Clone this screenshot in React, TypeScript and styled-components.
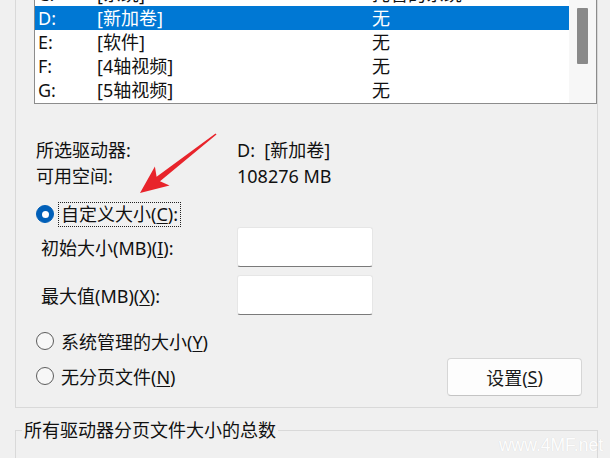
import React from "react";
import styled, { createGlobalStyle } from "styled-components";

const Global = createGlobalStyle`
  html, body { margin: 0; padding: 0; background: #f0f0f0; }
  body {
    font-family: "Noto Sans", "Noto Sans CJK SC", sans-serif;
    font-size: 18px;
    color: #111;
    overflow: hidden;
  }
`;

const Root = styled.div`
  position: relative;
  width: 610px;
  height: 458px;
  overflow: hidden;
  background: #f0f0f0;
`;

const Content = styled.div`
  margin-top: -50px;
  padding-left: 15px;
  display: flex;
  flex-direction: column;
`;

const GroupBox = styled.div`
  box-sizing: border-box;
  width: 583px;
  border: 1px solid #d9d9d9;
  padding: 30px 0 11px 18px;
  display: flex;
  flex-direction: column;
`;

const ListBox = styled.div`
  box-sizing: border-box;
  height: 123px;
  border: 1px solid #8c8c8c;
  background: #fff;
  display: flex;
  overflow: hidden;
`;

const Rows = styled.div`
  flex: 1;
  display: flex;
  flex-direction: column;
`;

const Row = styled.div<{ $selected?: boolean }>`
  height: 24px;
  flex: 0 0 24px;
  display: grid;
  grid-template-columns: 59px 275px 1fr;
  align-items: center;
  padding-left: 3px;
  line-height: 24px;
  background: ${(p) => (p.$selected ? "#0078d4" : "transparent")};
  color: ${(p) => (p.$selected ? "#fff" : "#111")};
  white-space: nowrap;
`;

const ScrollTrack = styled.div`
  width: 27px;
  flex: 0 0 27px;
  background: #f7f7f7;
  display: flex;
  justify-content: center;
  padding-top: 26px;
  box-sizing: border-box;
`;

const Thumb = styled.div`
  width: 11px;
  height: 56px;
  border-radius: 1px;
  background: #8a8a8a;
`;

const InfoGrid = styled.div`
  margin-top: 33px;
  margin-left: 2px;
  display: grid;
  grid-template-columns: 201px 1fr;
  grid-auto-rows: 26px;
  line-height: 26px;
`;

const RadioRow = styled.div<{ $mt: number }>`
  margin-top: ${(p) => p.$mt}px;
  margin-left: 2px;
  height: 26px;
  display: flex;
  align-items: center;
  gap: 7px;
  white-space: nowrap;
`;

const Radio = styled.span<{ $checked?: boolean }>`
  box-sizing: border-box;
  width: 18px;
  height: 18px;
  border-radius: 50%;
  flex: 0 0 18px;
  display: flex;
  align-items: center;
  justify-content: center;
  background: ${(p) => (p.$checked ? "#005fb8" : "#f7f7f7")};
  border: 1px solid ${(p) => (p.$checked ? "#005fb8" : "#5c5c5c")};
  &::after {
    content: "";
    width: 7px;
    height: 7px;
    border-radius: 50%;
    background: #fff;
    display: ${(p) => (p.$checked ? "block" : "none")};
  }
`;

const Focus = styled.span`
  border: 1px dotted #222;
  padding: 0 2px;
  margin-left: -3px;
  line-height: 23px;
`;

const U = styled.span`
  text-decoration: underline;
  text-underline-offset: 2px;
  text-decoration-thickness: 1px;
`;

const FieldRow = styled.div<{ $mt: number }>`
  margin-top: ${(p) => p.$mt}px;
  height: 40px;
  display: grid;
  grid-template-columns: 196px 136px;
  align-items: center;
  padding-left: 7px;
  white-space: nowrap;
`;

const Input = styled.div`
  box-sizing: border-box;
  height: 40px;
  background: #fff;
  border: 1px solid #e6e6e6;
  border-bottom: 1px solid #7a7a7a;
  border-radius: 3px;
`;

const ButtonRow = styled.div`
  margin-top: 4px;
  height: 38px;
  display: flex;
  align-items: center;
  padding-right: 15px;
`;

const ButtonRadio = styled.div`
  margin-left: 2px;
  display: flex;
  align-items: center;
  gap: 7px;
  margin-top: -2px;
`;

const Button = styled.div`
  margin-left: auto;
  box-sizing: border-box;
  width: 135px;
  height: 38px;
  background: #fdfdfd;
  border: 1px solid #d6d6d6;
  border-bottom-color: #c4c4c4;
  border-radius: 4px;
  display: flex;
  align-items: center;
  justify-content: center;
  color: #1a1a1a;
`;

const TotalGroup = styled.fieldset`
  box-sizing: border-box;
  width: 583px;
  margin: 10px 0 0 0;
  padding: 0 0 0 6px;
  border: 1px solid #d9d9d9;
  height: 80px;
`;

const Legend = styled.legend`
  padding: 0 2px;
  line-height: 24px;
  color: #111;
`;

const Arrow = styled.svg`
  position: absolute;
  left: 0;
  top: 0;
  width: 610px;
  height: 458px;
  pointer-events: none;
`;

const Watermark = styled.div`
  position: absolute;
  right: 7px;
  bottom: 2px;
  font-family: "Liberation Sans", Arial, sans-serif;
  font-size: 17.5px;
  color: rgba(255, 255, 255, 0.97);
  text-shadow: 0 0 1px rgba(0, 0, 0, 0.12);
  pointer-events: none;
`;

const drives = [
  { d: "C:", label: "[系统]", size: "托管的系统" },
  { d: "D:", label: "[新加卷]", size: "无", selected: true },
  { d: "E:", label: "[软件]", size: "无" },
  { d: "F:", label: "[4轴视频]", size: "无" },
  { d: "G:", label: "[5轴视频]", size: "无" },
];

export default function App() {
  return (
    <Root>
      <Global />
      <Content>
        <GroupBox>
          <ListBox>
            <Rows>
              {drives.map((r) => (
                <Row key={r.d} $selected={r.selected}>
                  <span>{r.d}</span>
                  <span>{r.label}</span>
                  <span>{r.size}</span>
                </Row>
              ))}
            </Rows>
            <ScrollTrack>
              <Thumb />
            </ScrollTrack>
          </ListBox>

          <InfoGrid>
            <span>所选驱动器:</span>
            <span>D:&nbsp;&nbsp;[新加卷]</span>
            <span>可用空间:</span>
            <span>108276 MB</span>
          </InfoGrid>

          <RadioRow $mt={12}>
            <Radio $checked />
            <Focus>
              自定义大小(<U>C</U>):
            </Focus>
          </RadioRow>

          <FieldRow $mt={0}>
            <span>
              初始大小(MB)(<U>I</U>):
            </span>
            <Input />
          </FieldRow>

          <FieldRow $mt={8}>
            <span>
              最大值(MB)(<U>X</U>):
            </span>
            <Input />
          </FieldRow>

          <RadioRow $mt={13}>
            <Radio />
            <span>
              系统管理的大小(<U>Y</U>)
            </span>
          </RadioRow>

          <ButtonRow>
            <ButtonRadio>
              <Radio />
              <span>
                无分页文件(<U>N</U>)
              </span>
            </ButtonRadio>
            <Button>
              设置(<U>S</U>)
            </Button>
          </ButtonRow>
        </GroupBox>

        <TotalGroup>
          <Legend>所有驱动器分页文件大小的总数</Legend>
        </TotalGroup>
      </Content>

      <Arrow viewBox="0 0 610 458">
        <polygon
          fill="#e8242b"
          points="140,193 169.5,185.5 160,181.2 216.5,134.6 215.5,133.4 156.6,176.8 154.9,166.5"
        />
      </Arrow>
      <Watermark>www.4MF.net</Watermark>
    </Root>
  );
}
